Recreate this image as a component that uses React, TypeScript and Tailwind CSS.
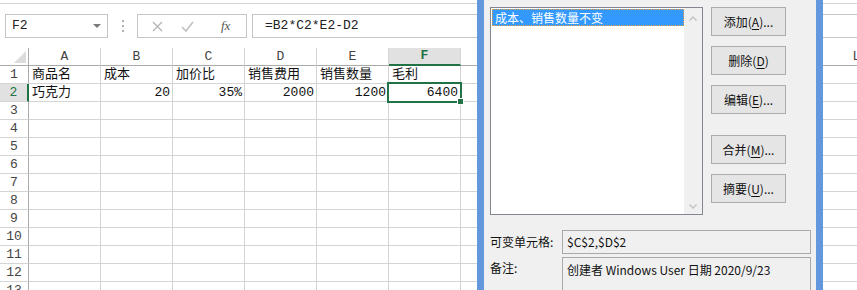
import React from "react";

const COLS = ["A", "B", "C", "D", "E", "F", "G", "H", "I", "J", "K", "L"];

type Cell = { text: string; right?: boolean };

const ROWS: Cell[][] = [
  [
    { text: "商品名" },
    { text: "成本" },
    { text: "加价比" },
    { text: "销售费用" },
    { text: "销售数量" },
    { text: "毛利" },
  ],
  [
    { text: "巧克力" },
    { text: "20", right: true },
    { text: "35%", right: true },
    { text: "2000", right: true },
    { text: "1200", right: true },
    { text: "6400", right: true },
  ],
];

const sheetFont = { fontFamily: '"Liberation Mono", "Noto Sans CJK SC", monospace' };
const uiFont = { fontFamily: '"Noto Sans CJK SC", "Noto Sans", sans-serif' };

function FormulaBar() {
  return (
    <div className="h-[48px] bg-white">
      <div className="h-[4px] border-b border-[#d5d5d5]" />
      <div className="flex items-start pt-[10px]">
        {/* name box */}
        <div className="ml-[5px] flex h-[24px] w-[103px] items-center justify-between border border-[#c6c6c6] pl-[6px] pr-[6px] text-[13px] text-[#222]">
          <span>F2</span>
          <svg width="8" height="5" viewBox="0 0 8 5">
            <polygon points="0,0 8,0 4,4" fill="#7a7a7a" />
          </svg>
        </div>
        <div className="flex h-[24px] w-[29px] flex-col items-center justify-center gap-[3px]">
          <span className="h-[2px] w-[2px] bg-[#b0b0b0]" />
          <span className="h-[2px] w-[2px] bg-[#b0b0b0]" />
          <span className="h-[2px] w-[2px] bg-[#b0b0b0]" />
        </div>
        {/* cancel / enter / fx */}
        <div className="flex h-[24px] w-[110px] items-center border border-[#c6c6c6] pl-[14px]">
          <svg width="11" height="11" viewBox="0 0 11 11">
            <path d="M1 1 L10 10 M10 1 L1 10" stroke="#b4b4b4" strokeWidth="1.3" />
          </svg>
          <svg className="ml-[18px]" width="13" height="11" viewBox="0 0 13 11">
            <path d="M1 6 L5 10 L12 1" stroke="#c0c0c0" strokeWidth="1.6" fill="none" />
          </svg>
          <span
            className="ml-[27px] text-[13px] italic text-[#555]"
            style={{ fontFamily: '"Liberation Serif", serif' }}
          >
            fx
          </span>
        </div>
        <div className="ml-[5px] flex h-[24px] flex-1 items-center border-y border-l border-[#c6c6c6] pl-[12px] text-[13px] text-[#222]">
          =B2*C2*E2-D2
        </div>
      </div>
    </div>
  );
}

function Sheet() {
  const rows = Array.from({ length: 13 }, (_, i) => i + 1);
  return (
    <div className="relative grid grid-cols-[29px_repeat(12,72px)] text-[13px] text-[#111]">
      {/* header row */}
      <div className="relative h-[18px] border-b border-r border-[#ababab]">
        <svg className="absolute bottom-[2px] right-[2px]" width="12" height="12" viewBox="0 0 12 12">
          <polygon points="12,0 12,12 0,12" fill="#dcdcdc" />
        </svg>
      </div>
      {COLS.map((c) => (
        <div
          key={c}
          className={
            c === "F"
              ? "flex h-[18px] items-center justify-center border-b-2 border-r border-b-[#217346] border-r-[#d5d5d5] bg-[#e1e1e1] font-bold text-[#217346]"
              : "flex h-[18px] items-center justify-center border-b border-r border-b-[#ababab] border-r-[#d5d5d5] text-[#444]"
          }
        >
          {c}
        </div>
      ))}
      {rows.map((r) => (
        <React.Fragment key={r}>
          <div
            className={
              r === 2
                ? "flex h-[18px] items-center justify-center border-b border-r-2 border-b-[#d5d5d5] border-r-[#217346] bg-[#e1e1e1] text-[#217346]"
                : "flex h-[18px] items-center justify-center border-b border-r border-b-[#d5d5d5] border-r-[#ababab] text-[#444]"
            }
          >
            {r}
          </div>
          {COLS.map((c, ci) => {
            const cell = ROWS[r - 1]?.[ci];
            return (
              <div
                key={c}
                className={
                  cell?.right
                    ? "flex h-[18px] items-center justify-end border-b border-r border-[#d4d4d4] pr-[2px] whitespace-nowrap"
                    : "flex h-[18px] items-center border-b border-r border-[#d4d4d4] pl-[3px] whitespace-nowrap"
                }
              >
                {cell?.text}
              </div>
            );
          })}
        </React.Fragment>
      ))}
      {/* active cell F2 */}
      <div className="pointer-events-none absolute left-[387px] top-[34px] h-[21px] w-[75px] border-2 border-[#217346]" />
      <div className="pointer-events-none absolute left-[457px] top-[50px] h-[7px] w-[7px] border border-white bg-[#217346]" />
    </div>
  );
}

function DlgButton({ label, hot, tail }: { label: string; hot: string; tail: string }) {
  return (
    <button className="flex h-[29px] w-[75px] items-center justify-center border border-[#acacac] bg-[#e5e5e5] text-[12px] text-[#111]">
      {label}(<span className="underline underline-offset-2">{hot}</span>){tail}
    </button>
  );
}

function ScenarioDialog() {
  return (
    <div
      className="absolute left-[477px] top-0 h-[300px] w-[346px] border-x-[7px] border-[#6399dc] bg-[#f0f0f0] text-[12px] text-[#111]"
      style={uiFont}
    >
      <div className="flex pl-[6px] pt-[7px]">
        {/* scenario list */}
        <div className="flex h-[208px] w-[213px] border border-[#828790] bg-white">
          <div className="flex-1 pl-[1px] pt-[1px]">
            <div className="flex h-[17px] items-center bg-[#3399ff] pl-[3px] leading-none text-white outline-1 outline-dotted outline-[#f0a040] -outline-offset-1">
              成本、销售数量不变
            </div>
          </div>
          <div className="flex w-[18px] flex-col items-center justify-between bg-[#f0f0f0] pb-[5px] pt-[8px]">
            <svg width="8" height="5" viewBox="0 0 8 5">
              <path d="M0.5 4.5 L4 1 L7.5 4.5" stroke="#c2c2c2" strokeWidth="1.4" fill="none" />
            </svg>
            <svg width="8" height="5" viewBox="0 0 8 5">
              <path d="M0.5 0.5 L4 4 L7.5 0.5" stroke="#c2c2c2" strokeWidth="1.4" fill="none" />
            </svg>
          </div>
        </div>
        {/* buttons */}
        <div className="ml-[8px] flex flex-col">
          <DlgButton label="添加" hot="A" tail="..." />
          <div className="mt-[10px]">
            <DlgButton label="删除" hot="D" tail="" />
          </div>
          <div className="mt-[10px]">
            <DlgButton label="编辑" hot="E" tail="..." />
          </div>
          <div className="mt-[21px]">
            <DlgButton label="合并" hot="M" tail="..." />
          </div>
          <div className="mt-[10px]">
            <DlgButton label="摘要" hot="U" tail="..." />
          </div>
        </div>
      </div>
      <div className="mt-[15px] flex items-center pl-[6px]">
        <span className="w-[72px]">可变单元格:</span>
        <div className="flex h-[24px] w-[249px] items-center border border-[#a9a9a9] pl-[4px]">$C$2,$D$2</div>
      </div>
      <div className="mt-[3px] flex items-start pl-[6px]">
        <span className="w-[72px] pt-[2px]">备注:</span>
        <div className="h-[50px] w-[249px] border border-[#a9a9a9] pl-[4px] pt-[3px]">
          创建者 Windows User 日期 2020/9/23
        </div>
      </div>
    </div>
  );
}

export default function App() {
  return (
    <div className="relative h-[290px] w-[857px] overflow-hidden bg-white" style={sheetFont}>
      <FormulaBar />
      <Sheet />
      <ScenarioDialog />
    </div>
  );
}
